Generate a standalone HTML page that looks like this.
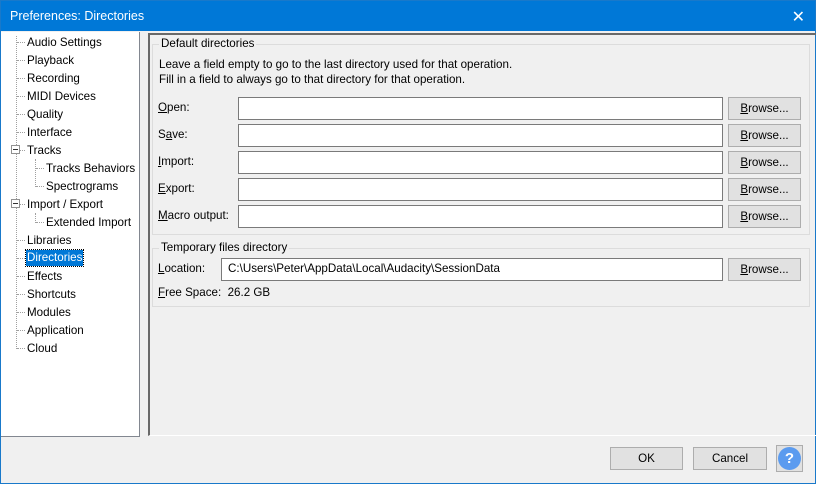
<!DOCTYPE html>
<html><head><style>
body{margin:0;width:816px;height:484px;overflow:hidden;font-family:"Liberation Sans",sans-serif;font-size:11.6px;color:#000}
.win{position:absolute;left:0;top:0;width:814px;height:482px;border:1px solid #1979ca;background:#f0f0f0}
.title{position:absolute;left:0;top:0;width:814px;height:30px;background:#0078d7;color:#fff;font-size:12.5px}
.title span{position:absolute;left:9px;top:8px}
.x{position:absolute;right:10px;top:6px;font-size:16px}
.tree{position:absolute;left:0;top:31px;width:138px;height:404px;background:#fff;border-right:1px solid #828790;border-bottom:1px solid #828790}
.it{position:absolute;white-space:nowrap;line-height:15px}
.dl{position:absolute;border-top:1px dotted #a0a0a0;width:8px}
.vl{position:absolute;border-left:1px dotted #a0a0a0}
.pm{position:absolute;width:7px;height:7px;border:1px solid #919191;background:#fff}
.pm:after{content:"";position:absolute;left:1px;top:3px;width:5px;height:1px;background:#333}
.panel{position:absolute;left:147px;top:32px;width:666px;height:400px;border-left:2px solid #696969;border-top:2px solid #696969;border-bottom:1px solid #fff}
.grp{position:absolute;border:1px solid #dcdcdc}
.gl{position:absolute;top:-8px;left:6px;background:#f0f0f0;padding:0 2px}
.t{position:absolute;white-space:nowrap}
.fld{position:absolute;background:#fff;border:1px solid #7a7a7a;height:21px}
.btn{position:absolute;background:#e1e1e1;border:1px solid #adadad;height:21px;text-align:center;line-height:21px}
</style></head><body>
<div class="win">
<div class="title"><span>Preferences: Directories</span><div class="x">✕</div></div>
<div class="tree">
<div class="vl" style="left:15px;top:4px;height:313px"></div>
<div class="vl" style="left:34px;top:127px;height:28px"></div>
<div class="vl" style="left:34px;top:181px;height:10px"></div>
<div class="dl" style="left:16px;top:10px"></div><div class="it" style="left:26px;top:3px">Audio Settings</div>
<div class="dl" style="left:16px;top:28px"></div><div class="it" style="left:26px;top:21px">Playback</div>
<div class="dl" style="left:16px;top:46px"></div><div class="it" style="left:26px;top:39px">Recording</div>
<div class="dl" style="left:16px;top:64px"></div><div class="it" style="left:26px;top:57px">MIDI Devices</div>
<div class="dl" style="left:16px;top:82px"></div><div class="it" style="left:26px;top:75px">Quality</div>
<div class="dl" style="left:16px;top:100px"></div><div class="it" style="left:26px;top:93px">Interface</div>
<div class="dl" style="left:16px;top:118px"></div><div class="pm" style="left:10px;top:113px"></div><div class="it" style="left:26px;top:111px">Tracks</div>
<div class="dl" style="left:35px;top:136px"></div><div class="it" style="left:45px;top:129px">Tracks Behaviors</div>
<div class="dl" style="left:35px;top:154px"></div><div class="it" style="left:45px;top:147px">Spectrograms</div>
<div class="dl" style="left:16px;top:172px"></div><div class="pm" style="left:10px;top:167px"></div><div class="it" style="left:26px;top:165px">Import / Export</div>
<div class="dl" style="left:35px;top:190px"></div><div class="it" style="left:45px;top:183px">Extended Import</div>
<div class="dl" style="left:16px;top:208px"></div><div class="it" style="left:26px;top:201px">Libraries</div>
<div class="dl" style="left:16px;top:226px"></div><div class="it" style="left:25px;top:218px;background:#0078d7;color:#fff;padding:0 1px;height:16px;outline:1px dotted #000">Directories</div>
<div class="dl" style="left:16px;top:244px"></div><div class="it" style="left:26px;top:237px">Effects</div>
<div class="dl" style="left:16px;top:262px"></div><div class="it" style="left:26px;top:255px">Shortcuts</div>
<div class="dl" style="left:16px;top:280px"></div><div class="it" style="left:26px;top:273px">Modules</div>
<div class="dl" style="left:16px;top:298px"></div><div class="it" style="left:26px;top:291px">Application</div>
<div class="dl" style="left:16px;top:316px"></div><div class="it" style="left:26px;top:309px">Cloud</div>
</div>
<div class="panel"></div>
<div class="grp" style="left:151px;top:43px;width:656px;height:189px"><div class="gl">Default directories</div></div>
<div class="t" style="left:158px;top:57px">Leave a field empty to go to the last directory used for that operation.</div>
<div class="t" style="left:158px;top:72px">Fill in a field to always go to that directory for that operation.</div>
<div class="t" style="left:157px;top:100px"><u>O</u>pen:</div>
<div class="t" style="left:157px;top:127px">S<u>a</u>ve:</div>
<div class="t" style="left:157px;top:154px"><u>I</u>mport:</div>
<div class="t" style="left:157px;top:181px"><u>E</u>xport:</div>
<div class="t" style="left:157px;top:208px"><u>M</u>acro output:</div>
<div class="fld" style="left:237px;top:96px;width:483px"></div>
<div class="fld" style="left:237px;top:123px;width:483px"></div>
<div class="fld" style="left:237px;top:150px;width:483px"></div>
<div class="fld" style="left:237px;top:177px;width:483px"></div>
<div class="fld" style="left:237px;top:204px;width:483px"></div>
<div class="btn" style="left:727px;top:96px;width:71px"><u>B</u>rowse...</div>
<div class="btn" style="left:727px;top:123px;width:71px"><u>B</u>rowse...</div>
<div class="btn" style="left:727px;top:150px;width:71px"><u>B</u>rowse...</div>
<div class="btn" style="left:727px;top:177px;width:71px"><u>B</u>rowse...</div>
<div class="btn" style="left:727px;top:204px;width:71px"><u>B</u>rowse...</div>
<div class="grp" style="left:151px;top:247px;width:656px;height:57px"><div class="gl">Temporary files directory</div></div>
<div class="t" style="left:157px;top:261px"><u>L</u>ocation:</div>
<div class="fld" style="left:220px;top:257px;width:500px"><span style="position:absolute;left:6px;top:3px">C:\Users\Peter\AppData\Local\Audacity\SessionData</span></div>
<div class="btn" style="left:727px;top:257px;width:71px"><u>B</u>rowse...</div>
<div class="t" style="left:157px;top:285px"><u>F</u>ree Space:&nbsp; 26.2 GB</div>
<div class="btn" style="left:609px;top:446px;width:71px">OK</div>
<div class="btn" style="left:692px;top:446px;width:72px">Cancel</div>
<div class="btn" style="left:775px;top:444px;width:25px;height:25px;background:#e1e1e1"><div style="position:absolute;left:1px;top:1px;width:23px;height:23px;border-radius:50%;background:#5b9bef;color:#fff;font-weight:bold;font-size:15px;line-height:23px">?</div></div>
</div>
</body></html>
